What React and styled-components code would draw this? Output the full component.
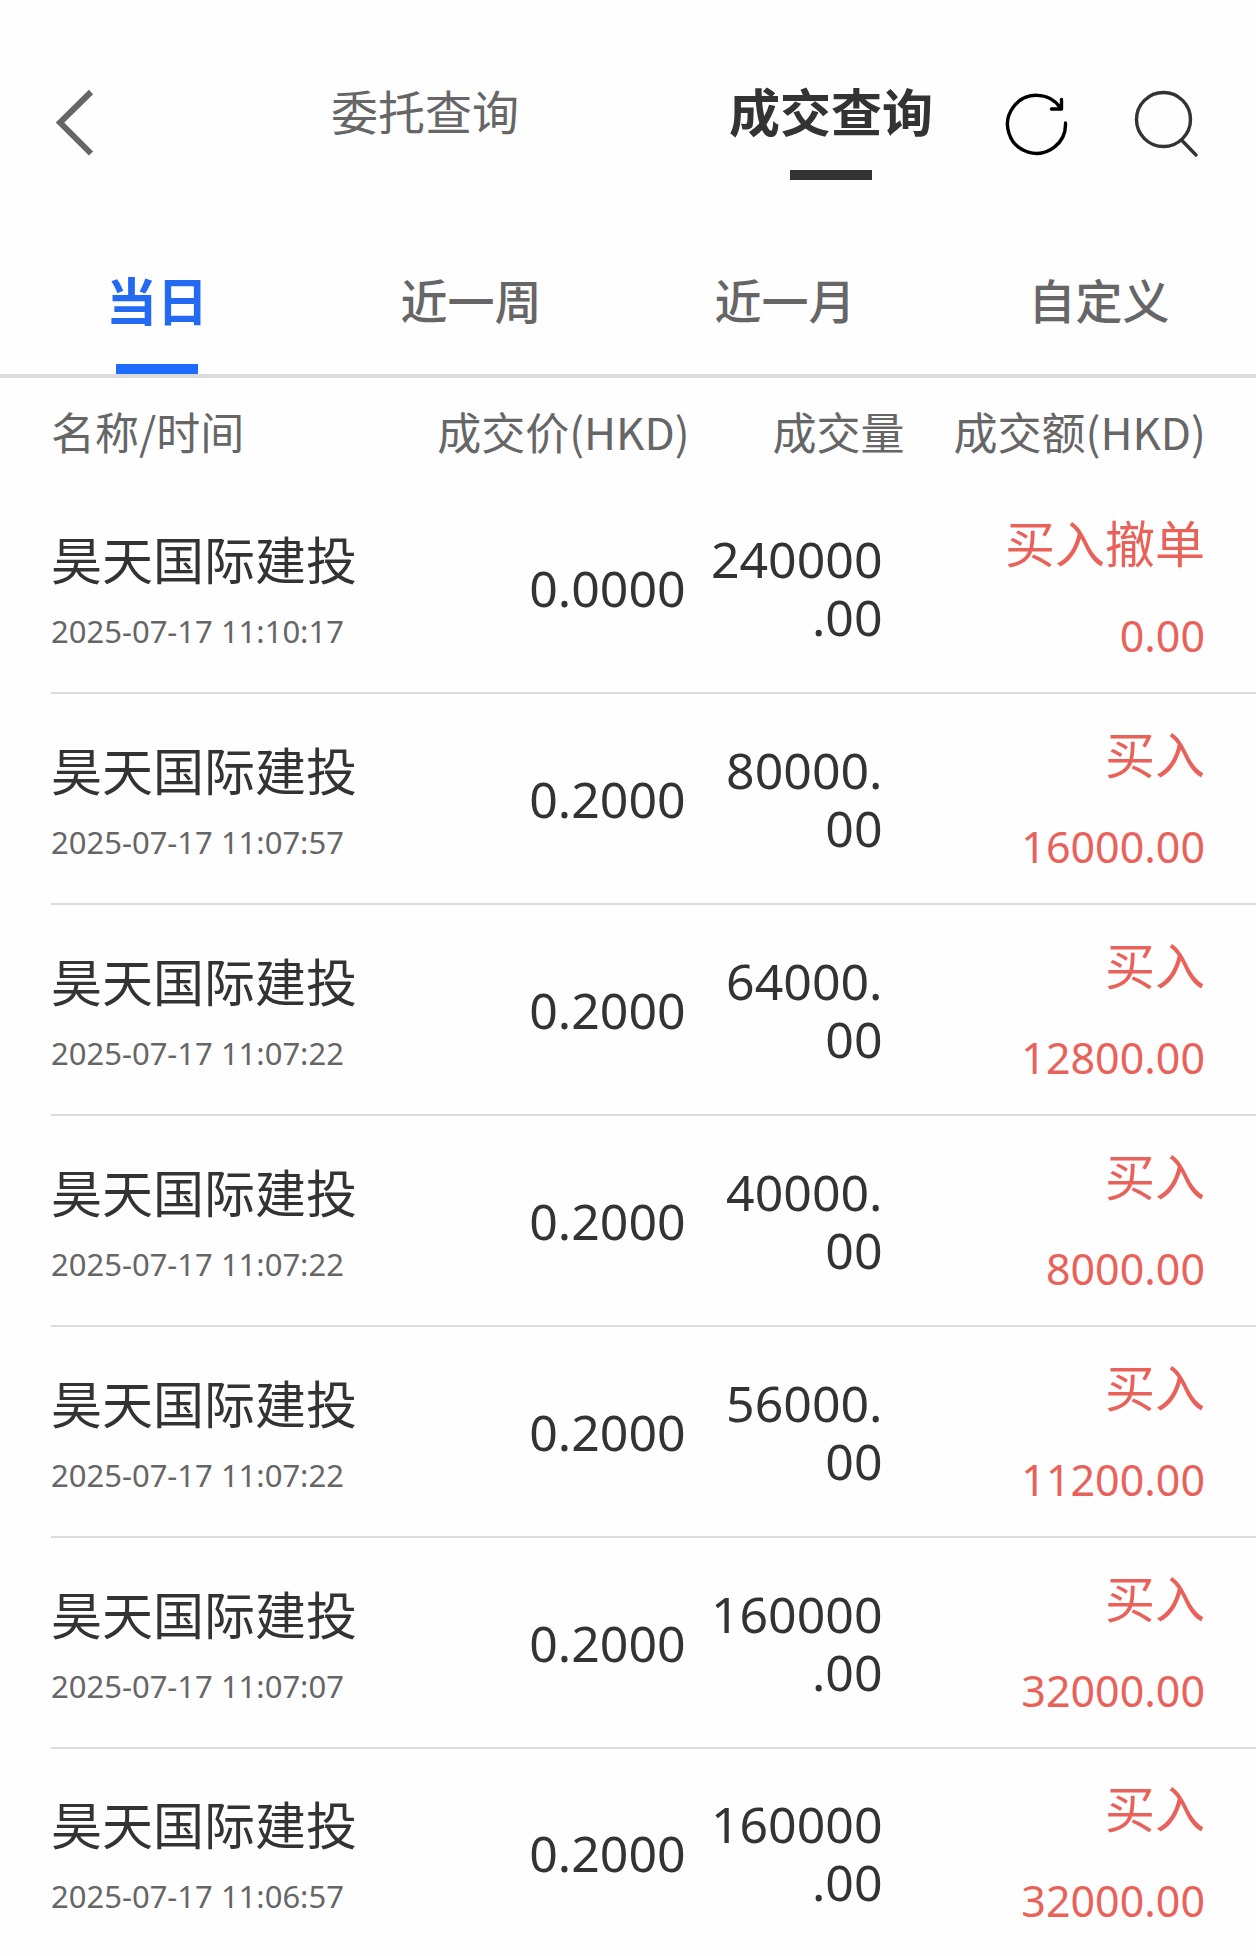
import React, { useState } from 'react';
import styled, { createGlobalStyle } from 'styled-components';

const GlobalStyle = createGlobalStyle`
  * {
    box-sizing: border-box;
  }

  body {
    margin: 0;
    background: #fefefe;
    color: #333;
    font-family: 'Noto Sans', 'Noto Sans CJK SC', sans-serif;
  }

  button {
    padding: 0;
    border: 0;
    background: none;
    color: inherit;
    font-family: inherit;
    cursor: pointer;
  }
`;

const Header = styled.header`
  display: flex;
  align-items: flex-start;
  padding: 76px 57px 50px 54px;
`;

const IconButton = styled.button`
  display: flex;
  align-items: center;
  height: 96px;

  svg {
    display: block;
    fill: none;
  }
`;

const PageTabs = styled.nav`
  display: flex;
  flex: 1;
  justify-content: space-between;
  margin: 0 72px 0 235px;
`;

const Indicator = styled.span`
  display: block;
  width: 82px;
  height: 10px;
  margin: ${({ $gap }) => $gap}px auto 0;
  background: ${({ $color }) => $color};
`;

const PageTab = styled.button`
  color: ${({ $active }) => ($active ? '#333' : '#666')};
  font-size: ${({ $active }) => ($active ? 51 : 47)}px;
  font-weight: ${({ $active }) => ($active ? 700 : 400)};
  line-height: 72px;
  white-space: nowrap;
`;

const Actions = styled.div`
  display: flex;
  gap: 62px;
`;

const RangeTabs = styled.nav`
  display: grid;
  grid-template-columns: repeat(4, 1fr);
  border-bottom: 4px solid #dbdbdb;
`;

const RangeTab = styled.button`
  padding-top: 35px;
  color: ${({ $active }) => ($active ? '#2469f2' : '#666')};
  font-size: ${({ $active }) => ($active ? 51 : 47)}px;
  font-weight: ${({ $active }) => ($active ? 700 : 500)};
  line-height: 72px;
`;

const TableWrapper = styled.main`
  padding-left: 51px;
`;

const Table = styled.table`
  width: 100%;
  table-layout: fixed;
  border-spacing: 0;
`;

const HeadCell = styled.th`
  width: ${({ $width }) => $width};
  height: 105px;
  padding: 0 ${({ $right }) => $right || 0}px 0 0;
  color: #666;
  font-family: 'Noto Sans CJK SC', sans-serif;
  font-size: 44px;
  font-weight: 400;
  line-height: 58px;
  text-align: ${({ $align }) => $align || 'right'};
  white-space: nowrap;
`;

const Row = styled.tr`
  &:not(:last-child) td {
    height: 211px;
    border-bottom: 2px solid #dbdbdb;
  }

  &:last-child td {
    height: 207px;
  }
`;

const Cell = styled.td`
  padding: 0;
  font-size: 51px;
  line-height: 58px;
  text-align: right;
`;

const NameCell = styled(Cell)`
  padding-top: 15px;
  text-align: left;
`;

const PriceCell = styled(Cell)`
  padding-right: 4px;
  font-size: 50px;
`;

const VolumeCell = styled(Cell)`
  padding: 0 24px 0 12px;
  font-size: 50px;
  overflow-wrap: anywhere;
`;

const AmountCell = styled(Cell)`
  padding: 5px 51px 0 0;
  color: #e8625a;
`;

const Name = styled.div`
  line-height: 72px;
  white-space: nowrap;
`;

const Time = styled.div`
  color: #666;
  font-size: 31px;
  line-height: 70px;
  white-space: nowrap;
`;

const Side = styled.div`
  font-size: 50px;
  line-height: 92px;
`;

const Amount = styled.div`
  font-size: 43px;
  line-height: 92px;
`;

const pages = ['委托查询', '成交查询'];
const ranges = ['当日', '近一周', '近一月', '自定义'];

const deals = [
  { id: 1, time: '2025-07-17 11:10:17', price: '0.0000', volume: '240000.00', side: '买入撤单', amount: '0.00' },
  { id: 2, time: '2025-07-17 11:07:57', price: '0.2000', volume: '80000.00', side: '买入', amount: '16000.00' },
  { id: 3, time: '2025-07-17 11:07:22', price: '0.2000', volume: '64000.00', side: '买入', amount: '12800.00' },
  { id: 4, time: '2025-07-17 11:07:22', price: '0.2000', volume: '40000.00', side: '买入', amount: '8000.00' },
  { id: 5, time: '2025-07-17 11:07:22', price: '0.2000', volume: '56000.00', side: '买入', amount: '11200.00' },
  { id: 6, time: '2025-07-17 11:07:07', price: '0.2000', volume: '160000.00', side: '买入', amount: '32000.00' },
  { id: 7, time: '2025-07-17 11:06:57', price: '0.2000', volume: '160000.00', side: '买入', amount: '32000.00' },
];

const BackIcon = () => (
  <svg width="42" height="70" viewBox="0 0 42 70" stroke="#666" strokeWidth="6">
    <path d="M37 3 6 33.5 37 64.5" />
  </svg>
);

const RefreshIcon = () => (
  <svg width="64" height="64" viewBox="0 0 64 64" stroke="#000" strokeWidth="3.4" strokeLinecap="round" strokeLinejoin="round">
    <path d="M60.5 31A29 29 0 1 1 55.5 16" />
    <path d="M56.5 7.5V17H46.5" />
  </svg>
);

const SearchIcon = () => (
  <svg width="68" height="68" viewBox="0 0 68 68" stroke="#333" strokeWidth="3.4" strokeLinecap="round">
    <circle cx="32.5" cy="29.5" r="27" />
    <path d="M50.5 50 65 65" />
  </svg>
);

const App = () => {
  const [page, setPage] = useState('成交查询');
  const [range, setRange] = useState('当日');

  return (
    <>
      <GlobalStyle />
      <Header>
        <IconButton type="button" aria-label="返回">
          <BackIcon />
        </IconButton>
        <PageTabs>
          {pages.map((item) => (
            <PageTab key={item} type="button" $active={item === page} onClick={() => setPage(item)}>
              {item}
              <Indicator $gap={22} $color={item === page ? '#333' : 'transparent'} />
            </PageTab>
          ))}
        </PageTabs>
        <Actions>
          <IconButton type="button" aria-label="刷新">
            <RefreshIcon />
          </IconButton>
          <IconButton type="button" aria-label="搜索">
            <SearchIcon />
          </IconButton>
        </Actions>
      </Header>
      <RangeTabs>
        {ranges.map((item) => (
          <RangeTab key={item} type="button" $active={item === range} onClick={() => setRange(item)}>
            {item}
            <Indicator $gap={27} $color={item === range ? '#1f6aff' : 'transparent'} />
          </RangeTab>
        ))}
      </RangeTabs>
      <TableWrapper>
        <Table>
          <thead>
            <tr>
              <HeadCell $width="24%" $align="left">名称/时间</HeadCell>
              <HeadCell $width="29%">成交价(HKD)</HeadCell>
              <HeadCell $width="18%" $right={2}>成交量</HeadCell>
              <HeadCell $width="29%" $right={50}>成交额(HKD)</HeadCell>
            </tr>
          </thead>
          <tbody>
            {deals.map((deal) => (
              <Row key={deal.id}>
                <NameCell>
                  <Name>昊天国际建投</Name>
                  <Time>{deal.time}</Time>
                </NameCell>
                <PriceCell>{deal.price}</PriceCell>
                <VolumeCell>{deal.volume}</VolumeCell>
                <AmountCell>
                  <Side>{deal.side}</Side>
                  <Amount>{deal.amount}</Amount>
                </AmountCell>
              </Row>
            ))}
          </tbody>
        </Table>
      </TableWrapper>
    </>
  );
};

export default App;
